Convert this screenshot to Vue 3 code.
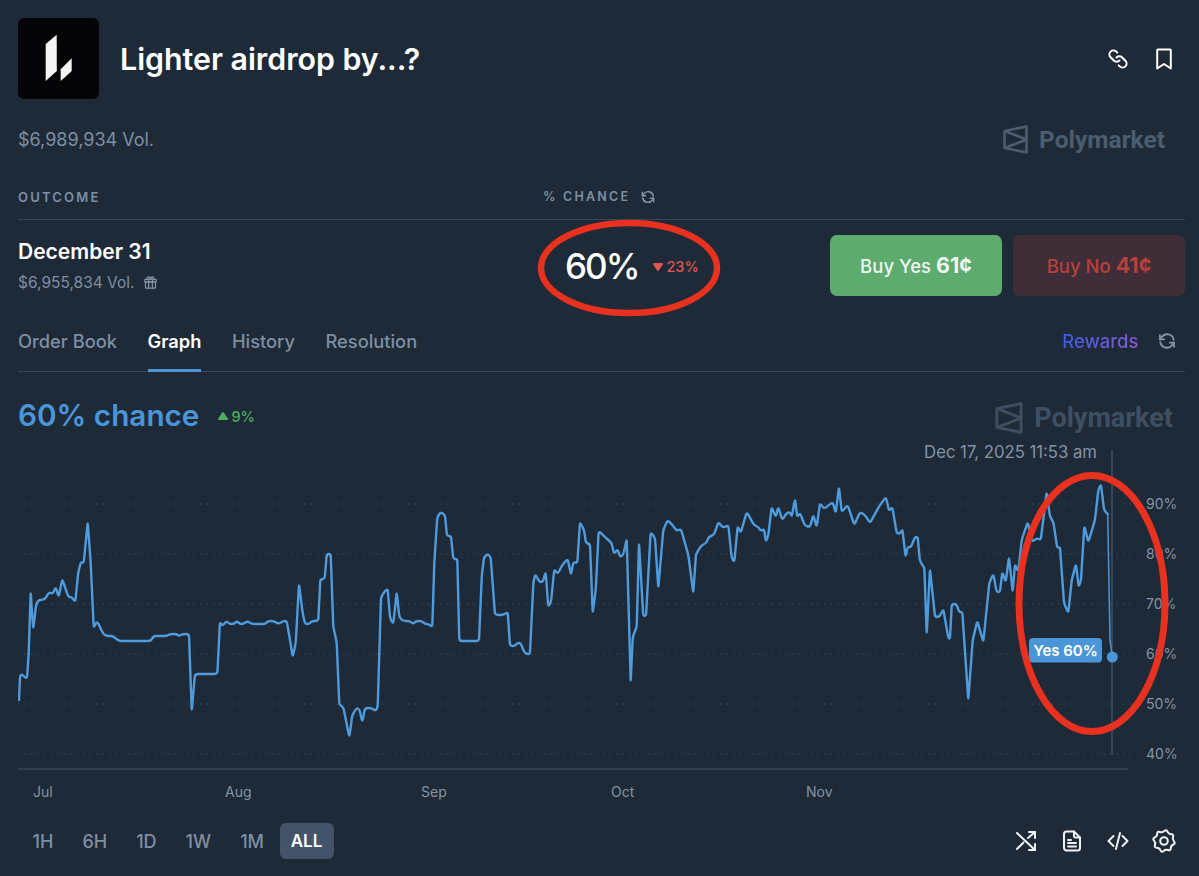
<template>
  <div class="page">
    <!-- Header -->
    <header class="head">
      <div class="logo">
        <svg width="81" height="81" viewBox="0 0 81 81" fill="#f4f4f5">
          <path d="M27.700 26 L38.700 16.700 L38.800 53 L27.700 63 Z" />
          <path d="M42.700 51.300 L53.700 40.300 L53.700 53 L42.700 63 Z" />
        </svg>
      </div>
      <h1 class="title">Lighter airdrop by...?</h1>
      <div class="icons">
        <svg v-for="i in headIcons" :key="i" class="icon" viewBox="0 0 24 24" fill="none" stroke="#fff" stroke-width="2" stroke-linecap="round" stroke-linejoin="round">
          <path v-for="d in icons[i]" :key="d" :d="d" />
        </svg>
      </div>
    </header>

    <div class="meta">
      <span class="vol">$6,989,934 Vol.</span>
      <div class="brand">
        <svg width="25" height="29" viewBox="0 0 25 29" fill="none" stroke="#4c5d70" stroke-width="2.600" stroke-linejoin="round">
          <path d="M1.500 6 L23.500 1.500 V27.500 L1.500 23 Z M1.500 6 L23.500 14.500 L1.500 23" />
        </svg>
        <span>Polymarket</span>
      </div>
    </div>

    <!-- Outcome table -->
    <div class="thead">
      <span class="th outcome">OUTCOME</span>
      <span class="th chance-th">
        % CHANCE
        <svg class="mini" viewBox="0 0 24 24" fill="none" stroke="#8593a5" stroke-width="2.200" stroke-linecap="round" stroke-linejoin="round">
          <path v-for="d in icons.refresh" :key="d" :d="d" />
        </svg>
      </span>
    </div>
    <div class="row">
      <div class="outcome">
        <div class="name">December 31</div>
        <div class="sub">
          $6,955,834 Vol.
          <svg class="gift" viewBox="0 0 24 24" fill="none" stroke="#8593a5" stroke-width="2" stroke-linecap="round" stroke-linejoin="round">
            <path v-for="d in icons.gift" :key="d" :d="d" />
          </svg>
        </div>
      </div>
      <div class="chance">
        <span class="big">60%</span>
        <span class="delta down">
          <svg class="tri" viewBox="0 0 12 10"><path d="M2 2 H10 L6 8 Z" /></svg>23%
        </span>
        <svg class="ring" width="190" height="104" viewBox="0 0 190 104" fill="none">
          <ellipse cx="95" cy="52" rx="88" ry="45" stroke="#e8321f" stroke-width="6.500" />
        </svg>
      </div>
      <div class="buttons">
        <button class="btn yes">Buy Yes <b>61¢</b></button>
        <button class="btn no">Buy No <b>41¢</b></button>
      </div>
    </div>

    <!-- Tabs -->
    <nav class="tabs">
      <a v-for="t in tabs" :key="t" class="tab" :class="{ active: t === 'Graph' }">{{ t }}</a>
      <span class="rewards">Rewards</span>
      <svg class="icon tab-icon" viewBox="0 0 24 24" fill="none" stroke="#8593a5" stroke-width="2.200" stroke-linecap="round" stroke-linejoin="round">
        <path v-for="d in icons.refresh" :key="d" :d="d" />
      </svg>
    </nav>

    <div class="chart-head">
      <span class="now">60% chance</span>
      <span class="delta up">
        <svg class="tri" viewBox="0 0 12 10"><path d="M2 8 H10 L6 2 Z" /></svg>9%
      </span>
      <div class="brand brand-lg">
        <svg width="28" height="32" viewBox="0 0 25 29" fill="none" stroke="#3f4f62" stroke-width="2.600" stroke-linejoin="round">
          <path d="M1.500 6 L23.500 1.500 V27.500 L1.500 23 Z M1.500 6 L23.500 14.500 L1.500 23" />
        </svg>
        <span>Polymarket</span>
      </div>
    </div>

    <!-- Chart, in page coordinates -->
    <svg class="chart" width="1167" height="370" viewBox="18 440 1167 370">
      <line v-for="g in grid" :key="g.y" x1="18" :y1="g.y" x2="1134" :y2="g.y" class="grid" />
      <line x1="18" y1="769" x2="1128" y2="769" class="axis" />
      <line x1="1112" y1="450" x2="1112" y2="755" class="cursor" />
      <path :d="linePath" class="line" />
      <path d="M1107.700 514 L1110 640 L1112.300 657" class="line-end" />
      <circle cx="1112.300" cy="657" r="5.500" fill="#4a96d8" />
      <rect x="1029" y="638" width="73" height="24.500" rx="4" fill="#4a96d8" />
      <text x="1065.500" y="655.500" text-anchor="middle" class="tip">Yes 60%</text>
      <text x="1097" y="457.500" text-anchor="end" class="stamp">Dec 17, 2025 11:53 am</text>
      <text v-for="g in grid" :key="g.label" x="1146" :y="g.y + 4.500" class="ylab">{{ g.label }}</text>
      <text v-for="m in months" :key="m.label" :x="m.x" y="797" class="xlab">{{ m.label }}</text>
      <ellipse cx="1092" cy="603.500" rx="73" ry="128" fill="none" stroke="#e8321f" stroke-width="7" />
    </svg>

    <!-- Range + tools -->
    <div class="foot">
      <button v-for="r in ranges" :key="r" class="range" :class="{ active: r === 'ALL' }">{{ r }}</button>
      <div class="icons">
        <svg v-for="i in footIcons" :key="i" class="icon" viewBox="0 0 24 24" fill="none" stroke="#eef1f4" stroke-width="2" stroke-linecap="round" stroke-linejoin="round">
          <path v-for="d in icons[i]" :key="d" :d="d" />
        </svg>
      </div>
    </div>
  </div>
</template>

<script setup>
const tabs = ['Order Book', 'Graph', 'History', 'Resolution']
const ranges = ['1H', '6H', '1D', '1W', '1M', 'ALL']
const headIcons = ['link', 'bookmark']
const footIcons = ['shuffle', 'doc', 'code', 'gear']

// eight soft lobes, smoothed through the midpoints
function gearPath() {
  const pts = []
  for (let k = 0; k < 16; k++) {
    const a = (k * Math.PI) / 8 + Math.PI / 16
    const r = k % 2 ? 8.3 : 12
    pts.push([12 + r * Math.cos(a), 12 + r * Math.sin(a)])
  }
  const mid = (p, q) => [(p[0] + q[0]) / 2, (p[1] + q[1]) / 2]
  const first = mid(pts[15], pts[0])
  let s = `M${first[0].toFixed(2)} ${first[1].toFixed(2)}`
  pts.forEach((p, i) => {
    const m = mid(p, pts[(i + 1) % 16])
    s += `Q${p[0].toFixed(2)} ${p[1].toFixed(2)} ${m[0].toFixed(2)} ${m[1].toFixed(2)}`
  })
  return s + 'Z'
}

const icons = {
  link: [
    'M13.500 13.500a4 4 0 0 1-5.700 0L4.600 10.300a4 4 0 0 1 5.700-5.700l1 1',
    'M10.500 10.500a4 4 0 0 1 5.700 0l3.200 3.200a4 4 0 0 1-5.700 5.700l-1-1',
  ],
  bookmark: ['M6 2.500h12a.8.8 0 0 1 .8.8V21.500l-6.800-4.500-6.800 4.500V3.300a.8.8 0 0 1 .8-.8z'],
  refresh: [
    'M20 10.500a8 8 0 0 0-14.500-3L3.500 10',
    'M3.500 5v5h5',
    'M4 13.500a8 8 0 0 0 14.500 3l2-2.500',
    'M20.500 19v-5h-5',
  ],
  gift: [
    'M4 11h16v9a1 1 0 0 1-1 1H5a1 1 0 0 1-1-1z',
    'M3 7h18v4H3z',
    'M9 7v14M15 7v14',
    'M9 7C6 7 6 3 8.500 3 10.500 3 12 5 12 7c0-2 1.500-4 3.500-4C18 3 18 7 15 7',
  ],
  shuffle: [
    'M3 4l18 17',
    'M3 20l6.500-6.500',
    'M14 9l7-6',
    'M15 3h6v6',
    'M21 15v6h-6',
  ],
  doc: [
    'M6.500 2.500h7.500l6 6V19a2.500 2.500 0 0 1-2.500 2.500h-11A2.500 2.500 0 0 1 4 19V5a2.500 2.500 0 0 1 2.500-2.500z',
    'M14 2.500V7a1.500 1.500 0 0 0 1.500 1.500H20',
    'M8 11h3M8 14h8M8 17.500h8',
  ],
  code: ['M7.500 7L2.500 12l5 5', 'M16.500 7l5 5-5 5', 'M14 4l-4 16'],
  gear: [gearPath(), 'M12 8.200a3.800 3.800 0 1 0 0 7.600 3.800 3.800 0 0 0 0-7.600z'],
}

const grid = [
  { y: 504, label: '90%' },
  { y: 554, label: '80%' },
  { y: 604, label: '70%' },
  { y: 654, label: '60%' },
  { y: 704, label: '50%' },
  { y: 754, label: '40%' },
]

const months = [
  { x: 33, label: 'Jul' },
  { x: 225, label: 'Aug' },
  { x: 421, label: 'Sep' },
  { x: 611, label: 'Oct' },
  { x: 806, label: 'Nov' },
]

// traced from the reference, page px: x, y pairs
const points = [
  19,700, 20,676, 21.7,674, 27,679, 28.7,653, 30.7,592, 32,613, 33.3,629, 36,605, 38.3,600, 45,599.3, 49,592, 52.7,594,
  55.7,587, 58.7,597, 62.3,579, 68.3,597, 71.7,597, 75.3,602, 78.3,572, 81,562, 83.7,563, 87.7,522, 90.7,563, 93.7,628,
  97,621, 103.3,634, 106.7,636, 113.3,636, 118.3,641, 151,641, 153.3,636, 166.7,636, 170,634, 176.7,634, 179,636,
  182.7,634, 189,634, 191.7,711, 195,674, 217.3,674, 220,622, 222.3,626, 226.7,621, 229.3,624, 234.3,624, 236.7,621,
  240,624, 243.3,624, 247.3,621, 251.7,624, 265.7,624, 267.7,621, 274,621, 278.3,624, 283.3,621, 286.7,621, 290,640,
  292.7,657, 295.7,643, 299,584, 302.7,613, 305,624, 309.3,624, 311.7,621, 318.3,621, 320.3,579, 324.7,579, 326.7,554,
  330.7,554, 333.3,627, 336.7,642, 339.3,705, 343.3,707, 349.3,737, 352.3,715, 356.7,708, 359.3,709, 362.3,722, 365,708,
  371.7,708, 375.7,711, 377.7,707, 381,597, 385,591, 387.7,589, 390,618, 393.3,624, 396.7,592, 399.3,617, 402.7,621,
  410,621, 412.7,624, 416,621, 421.7,621, 425,624, 428.3,624, 432.3,627, 434.3,563, 437.3,517, 440.7,512, 445,515,
  447,536, 451,536, 453.3,559, 457.3,559, 459.3,641, 479,641, 481.7,577, 484,557, 487.7,554, 490.7,557, 495,615,
  503.3,615, 507.7,612, 510,646, 515,646, 517.3,643, 520.7,643, 524,652, 526.7,654, 530,654, 533.3,583, 535.3,574,
  539.3,582, 542.7,582, 545.7,572, 548.3,607, 551,602, 554.3,569, 557.7,574, 562.3,565, 567.7,559, 571,575, 573.3,562,
  577.3,563, 580,522, 584,530, 586,543, 590,544, 592.7,613, 595.7,590, 598.7,531, 605,537, 611.7,543, 614,554, 617.7,549,
  620,557, 623.3,555, 626.7,539, 630.7,682, 632.7,637, 636.7,627, 639,543, 643.3,616, 646,616, 650.7,532, 655,538,
  658.3,588, 663.3,530, 667.7,520, 673.3,526, 676.7,531, 681,529, 688.3,555, 693.3,593, 696,554, 701.7,545, 706.7,543,
  708.3,537, 714,535, 718.3,522, 723.3,528, 728.3,525, 731.7,558, 734.3,562, 737.7,526, 740.7,533, 746.7,512, 754,525,
  758.3,527, 761,531, 764,529, 766,542, 768.3,535, 771.7,507, 775.7,517, 778.3,507, 782.3,520, 786.7,513, 790,512,
  791.7,517, 795,499, 797.3,517, 800,513, 805,526, 810,527, 813.3,515, 816.7,527, 820,503, 824,509, 832.7,502, 835.7,513,
  839,487, 841.7,512, 847.7,505, 854.3,525, 860,512, 865,515, 870,523, 879.3,506, 886,497, 889,511, 892.3,507, 896.7,533,
  900,534, 902.3,529, 905.7,557, 907.7,547, 911,547, 915,537, 917.7,537, 920,562, 924.3,567, 926.7,634, 930,569, 935,617,
  939.3,617, 943.3,609, 948.3,638, 950,639, 951.7,604, 956.7,604, 959,612, 962.3,612, 968.3,700, 972.7,640, 977.3,621,
  983.3,642, 989.3,583, 993.3,574, 996.7,592, 1000,592, 1002.3,572, 1005.7,582, 1009,557, 1012.7,592, 1015,564, 1018.3,572,
  1021.7,540, 1027.7,522, 1032.3,542, 1036.7,538, 1040.7,540, 1046.7,492, 1050,517, 1053.3,522, 1057.3,548, 1060,547,
  1064,603, 1068.3,613, 1071.7,580, 1076,564, 1078.7,587, 1081,580, 1084.3,526, 1088.3,542, 1095,520, 1098.3,490, 1101,484,
  1104,510, 1107.7,514,
]

// polyline with each corner rounded off, so the curve reads as smoothed
function smoothPath(p, r) {
  let s = `M${p[0]} ${p[1]}`
  for (let i = 2; i < p.length - 2; i += 2) {
    const [x, y] = [p[i], p[i + 1]]
    const [ax, ay] = [p[i - 2] - x, p[i - 1] - y]
    const [bx, by] = [p[i + 2] - x, p[i + 3] - y]
    const la = Math.hypot(ax, ay)
    const lb = Math.hypot(bx, by)
    const ra = Math.min(r, la / 2) / la
    const rb = Math.min(r, lb / 2) / lb
    s += `L${(x + ax * ra).toFixed(1)} ${(y + ay * ra).toFixed(1)}`
    s += `Q${x} ${y} ${(x + bx * rb).toFixed(1)} ${(y + by * rb).toFixed(1)}`
  }
  return s + `L${p[p.length - 2]} ${p[p.length - 1]}`
}

const linePath = smoothPath(points, 3)
</script>

<style>
html, body {
  margin: 0;
  background: #1e2a38;
}
</style>

<style scoped>
.page {
  box-sizing: border-box;
  width: 1199px;
  height: 876px;
  overflow: hidden;
  padding: 18px 14px 0 18px;
  background: #1e2a38;
  color: #fff;
  font-family: Inter, "Liberation Sans", sans-serif;
}

.head {
  display: flex;
  align-items: center;
  height: 81px;
}

.logo {
  width: 81px;
  height: 81px;
  border-radius: 6px;
  background: #050507;
}

.logo svg {
  display: block;
}

.title {
  margin: 0 0 0 21px;
  font-size: 30.300px;
  font-weight: 600;
}

.icons {
  display: flex;
  gap: 22px;
  margin-left: auto;
  margin-right: 9px;
}

.icon {
  display: block;
  width: 24px;
  height: 24px;
}

.meta {
  display: flex;
  align-items: center;
  justify-content: space-between;
  height: 32px;
  margin-top: 24px;
}

.vol {
  font-size: 18px;
  color: #7f8fa3;
}

.brand {
  display: flex;
  align-items: center;
  gap: 11px;
  margin-right: 20px;
  font-family: Roboto, Inter, sans-serif;
  font-size: 24.500px;
  font-weight: 700;
  color: #4c5d70;
}

.thead {
  display: flex;
  margin-top: 34px;
  padding-bottom: 14px;
  border-bottom: 1px solid #37465a;
  line-height: 16px;
}

.th {
  font-size: 12.500px;
  font-weight: 600;
  letter-spacing: 2.200px;
  color: #7f8fa3;
}

.thead .outcome {
  width: 525px;
  font-size: 13px;
  flex: none;
}

.chance-th {
  display: flex;
  align-items: center;
  gap: 10px;
}

.mini {
  width: 16px;
  height: 16px;
}

.row {
  display: flex;
  height: 76px;
  padding-top: 15px;
  box-sizing: border-box;
}

.row .outcome {
  width: 547px;
  flex: none;
  padding-top: 2px;
}

.name {
  font-size: 21px;
  font-weight: 600;
  line-height: 28px;
  margin-top: 1px;
}

.sub {
  display: flex;
  align-items: center;
  gap: 8px;
  margin-top: 7px;
  font-size: 15.500px;
  color: #7f8fa3;
}

.gift {
  width: 15px;
  height: 15px;
}

.chance {
  position: relative;
  display: flex;
  align-items: center;
  gap: 14px;
  height: 61px;
}

.big {
  font-size: 35px;
  font-weight: 500;
  letter-spacing: -2px;
}

.ring {
  position: absolute;
  left: -31.500px;
  top: -19.500px;
}

.delta {
  display: inline-flex;
  align-items: center;
  gap: 2px;
  font-size: 14.500px;
  font-weight: 500;
  margin-top: 2px;
}

.tri {
  width: 12px;
  height: 10px;
  fill: currentColor;
  stroke: currentColor;
  stroke-width: 2;
  stroke-linejoin: round;
}

.down {
  color: #e0564e;
}

.up {
  color: #4caf60;
  margin-left: 18px;
}

.buttons {
  display: flex;
  gap: 11px;
  margin-left: auto;
}

.btn {
  width: 172px;
  height: 61px;
  padding: 0 0 2px;
  border: 0;
  border-radius: 7px;
  font-family: inherit;
  font-size: 18.500px;
  font-weight: 500;
}

.btn b {
  font-size: 21.500px;
  font-weight: 700;
}

.yes {
  background: #5dab6f;
  color: #eef7ef;
}

.no {
  background: #3f2e37;
  color: #b8403f;
}

.tabs {
  display: flex;
  align-items: center;
  gap: 30.500px;
  height: 61px;
  margin-top: 14px;
  border-bottom: 1px solid #37465a;
}

.tab {
  display: flex;
  align-items: center;
  box-sizing: border-box;
  height: 62px;
  font-size: 18.300px;
  font-weight: 500;
  color: #7f8fa3;
  border-bottom: 3px solid transparent;
  border-top: 3px solid transparent;
}

.tab.active {
  color: #fff;
  font-weight: 600;
  border-bottom-color: #4a96d8;
}

.rewards {
  margin-left: auto;
  font-size: 18.500px;
  font-weight: 500;
  background: linear-gradient(90deg, #3a5ce8, #8a5ad0);
  -webkit-background-clip: text;
  background-clip: text;
  color: transparent;
}

.tab-icon {
  width: 20px;
  height: 20px;
  margin-right: 8px;
  margin-left: -12px;
}

.chart-head {
  display: flex;
  align-items: center;
  height: 40px;
  margin-top: 23px;
}

.now {
  font-size: 29.700px;
  font-weight: 600;
  color: #4a96d8;
}

.brand-lg {
  margin-left: auto;
  margin-right: 12px;
  margin-top: 5px;
  font-size: 27px;
  color: #3f4f62;
}

.chart {
  display: block;
  margin-top: 5px;
}

.grid {
  stroke: #3a4859;
  stroke-width: 1;
  stroke-dasharray: 1.500 5;
}

.axis {
  stroke: #37465a;
  stroke-width: 1.500;
}

.cursor {
  stroke: #3d5166;
  stroke-width: 1.500;
}

.line {
  fill: none;
  stroke: #4f9bdc;
  stroke-width: 2.400;
  stroke-linejoin: round;
  stroke-linecap: round;
}

.line-end {
  fill: none;
  stroke: #4a96d8;
  stroke-width: 1.500;
}

.tip {
  font-size: 15px;
  font-weight: 600;
  fill: #fff;
}

.stamp {
  font-size: 16.700px;
  fill: #8593a5;
}

.ylab {
  font-size: 14px;
  fill: #8593a5;
}

.xlab {
  font-size: 14px;
  fill: #8593a5;
}

.foot {
  display: flex;
  align-items: center;
  margin-top: 13px;
}

.range {
  height: 36px;
  padding: 0 14.500px;
  border: 0;
  border-radius: 6px;
  background: none;
  font-family: inherit;
  font-size: 18px;
  font-weight: 500;
  color: #7f8fa3;
}

.range.active {
  width: 54px;
  padding: 0;
  margin-left: 1px;
  background: #445368;
  color: #fff;
  font-size: 17px;
  font-weight: 600;
}
</style>
